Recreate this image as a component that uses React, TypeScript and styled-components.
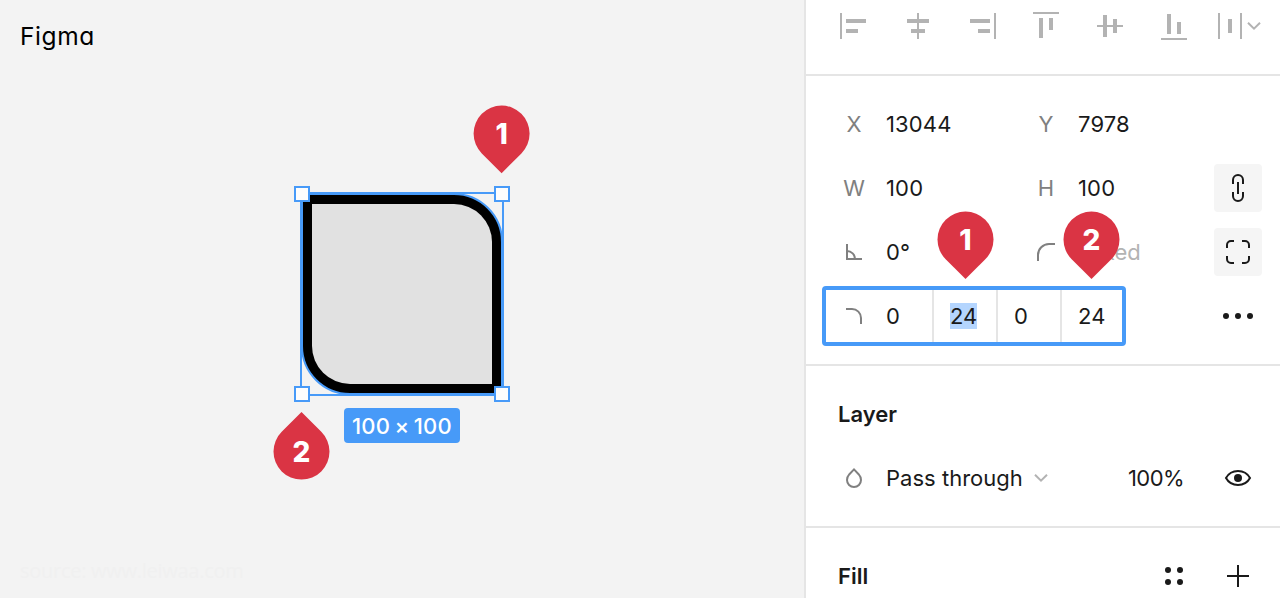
import React from "react";
import styled, { createGlobalStyle } from "styled-components";

const BLUE = "#479af8";
const RED = "#da3444";
const INK = "#1a1a1a";
const MUTED = "#808080";
const PALE = "#b3b3b3";
const LINE = "#e5e5e5";

const GlobalStyle = createGlobalStyle`
  body { margin: 0; background: #f2f2f2; overflow: hidden; }
  * { box-sizing: border-box; }
`;

const Page = styled.div`
  position: relative;
  display: flex;
  width: 1280px;
  height: 598px;
  overflow: hidden;
  font-family: Inter, "Liberation Sans", sans-serif;
  font-size: 22px;
  line-height: 32px;
  color: ${INK};
`;

const Canvas = styled.main`
  position: relative;
  display: flex;
  flex-direction: column;
  justify-content: space-between;
  width: 804px;
  padding: 19px 20px 11px;
  background: #f3f3f3;
`;

const Title = styled.h1`
  margin: 0;
  font-size: 24.5px;
  font-weight: 400;
  line-height: 34px;
  letter-spacing: 0.6px;
  font-feature-settings: "cv11" 1, "ss03" 1;
  color: #000;
`;

const Source = styled.footer`
  font-family: "Open Sans", sans-serif;
  font-size: 20px;
  letter-spacing: -0.27px;
  color: #f0f0f0;
`;

const Artwork = styled.svg`
  position: absolute;
  left: 290px;
  top: 182px;
`;

const SizeTag = styled.div`
  position: absolute;
  left: 344px;
  top: 408px;
  width: 116px;
  height: 35px;
  border-radius: 4px;
  background: ${BLUE};
  color: #fff;
  font-weight: 500;
  line-height: 36px;
  letter-spacing: 0.3px;
  text-align: center;
  white-space: nowrap;
  word-spacing: -2px;
`;

const PinBox = styled.div<{ $x: number; $y: number }>`
  position: absolute;
  left: 0;
  top: 0;
  transform: translate(${(p) => p.$x - 28}px, ${(p) => p.$y - 28}px);
  display: flex;
  align-items: center;
  justify-content: center;
  width: 56px;
  height: 56px;
  color: #fff;
  font-size: 28px;
  font-weight: 800;
`;

const PinShape = styled.span<{ $up?: boolean }>`
  position: absolute;
  inset: 0;
  border-radius: 50% 50% 0 50%;
  background: ${RED};
  transform: rotate(${(p) => (p.$up ? 225 : 45)}deg);
`;

const PinText = styled.span`
  position: relative;
`;

const Panel = styled.aside`
  display: flex;
  flex-direction: column;
  width: 476px;
  border-left: 2px solid ${LINE};
  background: #fff;
`;

const AlignBar = styled.div`
  display: grid;
  flex: none;
  grid-template-columns: repeat(7, 64px);
  align-items: center;
  justify-items: center;
  height: 76px;
  padding: 0 0 22px 16px;
  border-bottom: 2px solid ${LINE};
`;

const Section = styled.section`
  flex: none;
  padding: 16px 0 16px 16px;
  border-bottom: 2px solid ${LINE};
`;

const Row = styled.div`
  display: grid;
  grid-template-columns: 64px 128px 64px 136px 48px;
  align-items: center;
  height: 64px;
`;

const Label = styled.span`
  display: flex;
  justify-content: center;
  color: ${MUTED};
`;

const Value = styled.span<{ $pale?: boolean; $spacing?: number }>`
  letter-spacing: ${(p) => p.$spacing ?? 0.15}px;
  color: ${(p) => (p.$pale ? PALE : INK)};
`;

const ToolButton = styled.button<{ $filled?: boolean }>`
  display: flex;
  align-items: center;
  justify-content: center;
  width: 48px;
  height: 48px;
  padding: 0;
  border: 0;
  border-radius: 4px;
  background: ${(p) => (p.$filled ? "#f5f5f5" : "transparent")};
  color: ${INK};
`;

const RadiusRow = styled.div`
  display: flex;
  align-items: center;
  justify-content: space-between;
  width: 440px;
  height: 64px;
`;

const RadiusGroup = styled.div`
  display: flex;
  width: 304px;
  height: 60px;
  border: 4px solid ${BLUE};
  border-radius: 4px;
`;

const RadiusCell = styled.div<{ $first?: boolean }>`
  display: flex;
  flex: none;
  align-items: center;
  gap: 8px;
  width: ${(p) => (p.$first ? 106 : 64)}px;
  padding-left: ${(p) => (p.$first ? 4 : 16)}px;
  border-left: ${(p) => (p.$first ? 0 : 2)}px solid ${LINE};
`;

const Selected = styled.span`
  line-height: 26px;
  background: #b4d5fe;
`;

const SectionTitle = styled.h2`
  margin: 0;
  padding-left: 16px;
  font-size: 22px;
  font-weight: 600;
`;

const HeadRow = styled.div`
  display: grid;
  grid-template-columns: 320px 64px 64px;
  align-items: center;
  height: 64px;
`;

const LayerRow = styled.div`
  display: grid;
  grid-template-columns: 64px 242px 86px 48px;
  align-items: center;
  height: 64px;
`;

const BlendMode = styled.span`
  display: flex;
  align-items: center;
  gap: 11px;
`;

const Glyph = styled.svg<{ $tone?: string; $weight?: number }>`
  display: block;
  flex: none;
  overflow: visible;
  fill: none;
  stroke: ${(p) => p.$tone ?? INK};
  stroke-width: ${(p) => p.$weight ?? 2};
`;

const Solid = styled(Glyph)`
  stroke: none;
  fill: ${(p) => p.$tone ?? INK};
`;

const Icon = ({ d, tone, weight }: { d: string; tone?: string; weight?: number }) => (
  <Glyph width={48} height={48} viewBox="-24 -24 48 48" $tone={tone} $weight={weight}>
    <path d={d} />
  </Glyph>
);

const Dots = ({ at }: { at: [number, number][] }) => (
  <Solid width={48} height={48} viewBox="-24 -24 48 48">
    {at.map(([x, y]) => (
      <circle key={`${x},${y}`} cx={x} cy={y} r={3} />
    ))}
  </Solid>
);

// Bars of each alignment icon, as filled rectangles around the icon's centre.
const ALIGNMENTS = [
  "M-14-13h2v26h-2zM-8-7h20v4h-20zM-8 3h12v4h-12z",
  "M-1-13h2v26h-2zM-11-7h22v4h-22zM-7 3h14v4h-14z",
  "M12-13h2v26h-2zM-12-7h20v4h-20zM-4 3h12v4h-12z",
  "M-13-14h26v2h-26zM-7-8h4v20h-4zM3-8h4v12h-4z",
  "M-13-1h26v2h-26zM-7-11h4v22h-4zM3-7h4v14h-4z",
  "M-13 12h26v2h-26zM-7-12h4v20h-4zM3-4h4v12h-4z",
  "M-20-13h2v26h-2zM2-13h2v26h-2zM-10-7h4v14h-4z",
];

const Pin = ({ n, x, y, up }: { n: number; x: number; y: number; up?: boolean }) => (
  <PinBox $x={x} $y={y}>
    <PinShape $up={up} />
    <PinText>{n}</PinText>
  </PinBox>
);

export default function App() {
  return (
    <Page>
      <GlobalStyle />
      <Canvas>
        <Title>Figma</Title>
        <Artwork width={224} height={224} viewBox="290 182 224 224">
          <path d="M302 194H454A48 48 0 0 1 502 242V394H350A48 48 0 0 1 302 346Z" fill="#000" />
          <path d="M312 204H454A38 38 0 0 1 492 242V384H350A38 38 0 0 1 312 346Z" fill="#e1e1e1" />
          <g fill="none" stroke={BLUE} strokeWidth={2}>
            <path d="M302 194H454A48 48 0 0 1 502 242V394H350A48 48 0 0 1 302 346Z" />
            <rect x={301} y={193} width={202} height={202} />
            {[302, 502].map((x) =>
              [194, 394].map((y) => (
                <rect key={`${x},${y}`} x={x - 7} y={y - 7} width={14} height={14} fill="#fdfdfd" />
              )),
            )}
          </g>
        </Artwork>
        <SizeTag>100 × 100</SizeTag>
        <Source>source: www.leiwaa.com</Source>
      </Canvas>

      <Panel>
        <AlignBar>
          {ALIGNMENTS.map((d, i) => (
            <Solid key={i} width={48} height={48} viewBox="-24 -24 48 48" $tone={PALE}>
              <path d={d} />
              {i === 6 && (
                <path d="M10-3.3L16 2.7L22-3.3" fill="none" stroke={PALE} strokeWidth={2} />
              )}
            </Solid>
          ))}
        </AlignBar>

        <Section>
          <Row>
            <Label>X</Label>
            <Value>13044</Value>
            <Label>Y</Label>
            <Value>7978</Value>
          </Row>
          <Row>
            <Label>W</Label>
            <Value>100</Value>
            <Label>H</Label>
            <Value>100</Value>
            <ToolButton $filled>
              <Icon d="M-5-4V-8A5 5 0 0 1 5-8V-4M-5 4V8A5 5 0 0 0 5 8V4M0-6V6" />
            </ToolButton>
          </Row>
          <Row>
            <Label>
              <Icon tone={MUTED} d="M-7-8V7H8M-7-1A8 8 0 0 1 1 7" />
            </Label>
            <Value>0°</Value>
            <Label>
              <Icon tone={MUTED} d="M-8 9V3A11 11 0 0 1 3-8H9" />
            </Label>
            <Value $pale $spacing={-0.05}>Mixed</Value>
            <ToolButton $filled>
              <Icon d="M-11-4V-7A4 4 0 0 1-7-11H-4M4-11H7A4 4 0 0 1 11-7V-4M11 4V7A4 4 0 0 1 7 11H4M-4 11H-7A4 4 0 0 1-11 7V4" />
            </ToolButton>
          </Row>
          <RadiusRow>
            <RadiusGroup>
              <RadiusCell $first>
                <Icon tone={MUTED} d="M-8-7H-2A9 9 0 0 1 7 2V8" />
                <Value>0</Value>
              </RadiusCell>
              <RadiusCell>
                <Selected>24</Selected>
              </RadiusCell>
              <RadiusCell>
                <Value>0</Value>
              </RadiusCell>
              <RadiusCell>
                <Value>24</Value>
              </RadiusCell>
            </RadiusGroup>
            <ToolButton>
              <Dots at={[[-12, 0], [0, 0], [12, 0]]} />
            </ToolButton>
          </RadiusRow>
        </Section>

        <Section>
          <HeadRow>
            <SectionTitle>Layer</SectionTitle>
          </HeadRow>
          <LayerRow>
            <Label>
              <Icon
                tone={MUTED}
                d="M0-8.6L-4.6-3.8C-6.2-2-7 0-7 2A7 7 0 0 0 7 2C7 0 6.2-2 4.6-3.8Z"
              />
            </Label>
            <BlendMode>
              <Value $spacing={0.02}>Pass through</Value>
              <Glyph width={14} height={14} viewBox="-7 -7 14 14" $tone={PALE}>
                <path d="M-6-3.3L0 2.7L6-3.3" />
              </Glyph>
            </BlendMode>
            <Value $spacing={-0.6}>100%</Value>
            <ToolButton>
              <Glyph width={48} height={48} viewBox="-24 -24 48 48">
                <path d="M-12 0C-9.5-4.5-5-7 0-7S9.5-4.5 12 0C9.5 4.5 5 7 0 7S-9.5 4.5-12 0Z" />
                <circle r={4} fill={INK} stroke="none" />
              </Glyph>
            </ToolButton>
          </LayerRow>
        </Section>

        <Section>
          <HeadRow>
            <SectionTitle>Fill</SectionTitle>
            <Label>
              <Dots at={[[-6, -6], [6, -6], [-6, 6], [6, 6]]} />
            </Label>
            <Label>
              <Icon d="M-11 0H11M0-11V11" />
            </Label>
          </HeadRow>
        </Section>
      </Panel>

      <Pin n={1} x={501.6} y={133.6} />
      <Pin n={2} x={301.5} y={451.6} up />
      <Pin n={1} x={965.5} y={239.5} />
      <Pin n={2} x={1091.5} y={239.5} />
    </Page>
  );
}
